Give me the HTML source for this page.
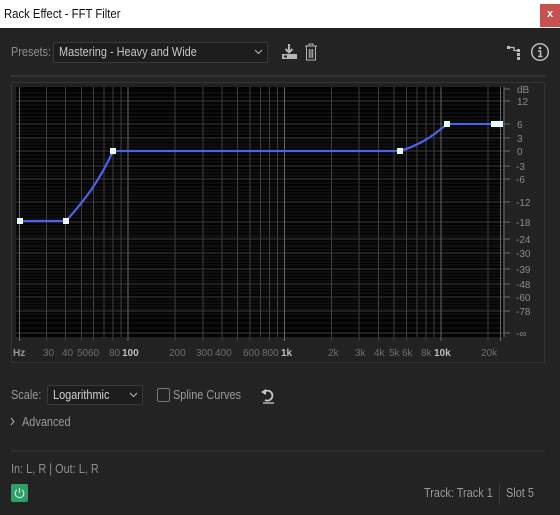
<!DOCTYPE html>
<html><head><meta charset="utf-8"><style>
*{margin:0;padding:0;box-sizing:border-box}
body{width:560px;height:515px;background:#232323;font-family:"Liberation Sans",sans-serif;font-size:13px;color:#a3a3a3;position:relative;overflow:hidden}
.a{position:absolute;white-space:nowrap}
.t{transform:scaleX(0.84);transform-origin:0 0}
</style></head><body>
<div class="a" style="left:0;top:0;width:560px;height:28px;background:#fff"></div>
<div class="a t" style="left:4px;top:6px;font-size:13px;color:#111;transform:scaleX(0.87)">Rack Effect - FFT Filter</div>
<div class="a" style="left:540px;top:4px;width:20px;height:23px;background:#c75050;color:#fff;font-size:11px;text-align:center;line-height:21px;font-weight:bold">x</div>

<div class="a t" style="left:11px;top:44px;color:#8f8f8f">Presets:</div>
<div class="a" style="left:53px;top:42px;width:215px;height:21px;background:#1d1d1d;border:1px solid #3a3a3a;border-radius:2px"></div>
<div class="a t" style="left:59px;top:44px;color:#c6c6c6">Mastering - Heavy and Wide</div>
<svg class="a" style="left:254px;top:48px" width="10" height="8"><path d="M1 2 L4.5 5.5 L8 2" stroke="#aaa" fill="none" stroke-width="1.2"/></svg>
<svg class="a" style="left:279px;top:43px" width="20" height="18"><path d="M10 1 V9 M6.5 6 L10 9.5 L13.5 6" stroke="#b5b5b5" stroke-width="2" fill="none"/><rect x="3" y="11" width="15" height="5" fill="#b5b5b5"/><rect x="5" y="12.5" width="3" height="2" fill="#232323"/></svg>
<svg class="a" style="left:303px;top:42px" width="16" height="20"><path d="M2 4 H14 M6 4 V2 H10 V4 M3.5 4.5 V18 H12.5 V4.5 M6.3 7 V16 M8 7 V16 M9.7 7 V16" stroke="#b5b5b5" stroke-width="1" fill="none"/></svg>
<svg class="a" style="left:506px;top:44px" width="18" height="16"><rect x="1" y="2" width="3" height="3" fill="#bbb"/><path d="M4 3.5 H8 V6.5 H11" stroke="#bbb" stroke-width="1.3" fill="none"/><rect x="11" y="5" width="3" height="3" fill="#bbb"/><rect x="11" y="9" width="3" height="3" fill="#bbb"/><rect x="11" y="13" width="3" height="3" fill="#bbb"/></svg>
<svg class="a" style="left:530px;top:42px" width="20" height="20"><circle cx="10" cy="10" r="8.3" stroke="#bbb" stroke-width="1.5" fill="none"/><circle cx="10" cy="6" r="1.3" fill="#bbb"/><path d="M8 9 H10.5 V14 M8 14.5 H12.5" stroke="#bbb" stroke-width="1.6" fill="none"/></svg>
<div class="a" style="left:11px;top:75px;width:534px;height:2px;background:#333"></div>

<div class="a" style="left:11px;top:82px;width:534px;height:281px;border:1px solid #343434;background:#222"></div>
<svg class="a" style="left:0;top:0" width="560" height="370">
<rect x="16" y="87" width="487" height="250" fill="#030303"/>
<g stroke="#181818" stroke-width="1">
<path d="M16 93H503M16 97H503M16 105H503M16 109H503M16 113H503M16 117H503M16 120H503M16 128H503M16 131H503M16 134H503M16 141H503M16 144H503M16 147H503M16 155H503M16 159H503M16 162H503M16 170H503M16 173H503M16 176H503M16 183H503M16 187H503M16 190H503M16 193H503M16 196H503M16 199H503M16 206H503M16 209H503M16 212H503M16 215H503M16 218H503M16 226H503M16 229H503M16 232H503M16 235H503M16 237H503M16 242H503M16 245H503M16 247H503M16 250H503M16 256H503M16 259H503M16 262H503M16 265H503M16 272H503M16 275H503M16 278H503M16 281H503M16 287H503M16 290H503M16 293H503M16 300H503M16 303H503M16 306H503M16 309H503M16 314H503M16 318H503M16 323H503M16 328H503"/>
</g>
<g stroke="#3e3e3e" stroke-width="1">
<path d="M16 101H503M16 124H503M16 138H503M16 151H503M16 166H503M16 179H503M16 202H503M16 222H503M16 239H503M16 253H503M16 269H503M16 284H503M16 297H503M16 311H503M16 333H503"/>
<path d="M46.5 87V341M65.5 87V341M81.5 87V341M93.5 87V341M104 87V337M113 87V341M121 87V337M175 87V341M203 87V341M222 87V341M237.5 87V341M250 87V341M260.5 87V337M269.5 87V341M277.5 87V337M331.5 87V341M359 87V341M378.5 87V341M394 87V341M406.5 87V341M417 87V337M426 87V341M434 87V337M488 87V341"/>
</g>
<g stroke="#666" stroke-width="1"><path d="M19.5 87V341M128 87V341M284.5 87V341M441 87V341M500.5 87V341"/></g>
<g stroke="#6a6a6a"><path d="M504 87V337M504 89H510M504 101H510M504 124H510M504 138H510M504 151H510M504 166H510M504 179H510M504 202H510M504 222H510M504 239H510M504 253H510M504 269H510M504 284H510M504 297H510M504 311H510M504 333H510"/></g>
<path d="M20 221H66C85 200 100 180 113 151H400C420 145 433 136 447 124H500" stroke="#4a63e6" stroke-width="2.2" fill="none"/>
<g fill="#eef8ff"><rect x="17" y="218" width="6" height="6"/><rect x="63" y="218" width="6" height="6"/><rect x="110" y="148" width="6" height="6"/><rect x="397" y="148" width="6" height="6"/><rect x="444" y="121" width="6" height="6"/><rect x="491" y="121" width="6" height="6"/><rect x="497" y="121" width="6" height="6"/></g>
<g font-family="Liberation Sans,sans-serif" font-size="10" fill="#8a8a8a">
<text x="517" y="93">dB</text><text x="517" y="105">12</text><text x="517" y="128">6</text><text x="517" y="142">3</text><text x="517" y="155">0</text><text x="516" y="170">-3</text><text x="516" y="183">-6</text><text x="516" y="206">-12</text><text x="516" y="226">-18</text><text x="516" y="243">-24</text><text x="516" y="257">-30</text><text x="516" y="273">-39</text><text x="516" y="288">-48</text><text x="516" y="301">-60</text><text x="516" y="315">-78</text><text x="516" y="337">-∞</text>
<g fill="#6e6e6e"><text x="43" y="356">30</text><text x="62" y="356">40</text><text x="77" y="356">50</text><text x="88" y="356">60</text><text x="109" y="356">80</text><text x="169" y="356">200</text><text x="196" y="356">300</text><text x="215" y="356">400</text><text x="243" y="356">600</text><text x="262" y="356">800</text><text x="328" y="356">2k</text><text x="355" y="356">3k</text><text x="374" y="356">4k</text><text x="389" y="356">5k</text><text x="402" y="356">6k</text><text x="421" y="356">8k</text><text x="481" y="356">20k</text></g>
<g fill="#bdbdbd" font-weight="bold"><text x="13" y="356" fill="#999">Hz</text><text x="122" y="356">100</text><text x="281" y="356">1k</text><text x="434" y="356">10k</text></g>
</g>
</svg>

<div class="a t" style="left:11px;top:387px;color:#9a9a9a">Scale:</div>
<div class="a" style="left:47px;top:385px;width:96px;height:20px;background:#1d1d1d;border:1px solid #3a3a3a;border-radius:2px"></div>
<div class="a t" style="left:53px;top:387px;color:#d0d0d0">Logarithmic</div>
<svg class="a" style="left:129px;top:391px" width="10" height="8"><path d="M1 2 L4.5 5.5 L8 2" stroke="#aaa" fill="none" stroke-width="1.2"/></svg>
<div class="a" style="left:157px;top:388px;width:13px;height:14px;border:1px solid #777;border-radius:2px"></div>
<div class="a t" style="left:173px;top:387px;color:#9a9a9a">Spline Curves</div>
<svg class="a" style="left:260px;top:387px" width="16" height="18"><path d="M4 5 A5 5 0 1 1 5 13" stroke="#c8c8c8" stroke-width="1.8" fill="none"/><path d="M1 5 L6 2 L6 8 Z" fill="#c8c8c8"/><path d="M3 16 H14" stroke="#c8c8c8" stroke-width="1.3"/></svg>
<svg class="a" style="left:10px;top:417px" width="6" height="10"><path d="M1 1 L4 4.5 L1 8" stroke="#aaa" fill="none" stroke-width="1.1"/></svg>
<div class="a t" style="left:22px;top:414px;color:#9a9a9a">Advanced</div>
<div class="a" style="left:11px;top:450px;width:534px;height:2px;background:#2e2e2e"></div>
<div class="a t" style="left:11px;top:461px;color:#8f8f8f">In: L, R | Out: L, R</div>
<div class="a" style="left:11px;top:484px;width:17px;height:18px;background:#2f9e68;border-radius:2px"></div>
<svg class="a" style="left:12px;top:485px" width="15" height="16"><path d="M4.8 5 A4.3 4.3 0 1 0 10.2 5" stroke="#bfe8cf" stroke-width="1.2" fill="none"/><path d="M7.5 3 V8" stroke="#bfe8cf" stroke-width="1.2"/></svg>
<div class="a t" style="left:424px;top:485px;color:#9a9a9a">Track: Track 1</div>
<div class="a" style="left:499px;top:483px;width:1px;height:22px;background:#3a3a3a"></div>
<div class="a t" style="left:506px;top:485px;color:#9a9a9a">Slot 5</div>
</body></html>
